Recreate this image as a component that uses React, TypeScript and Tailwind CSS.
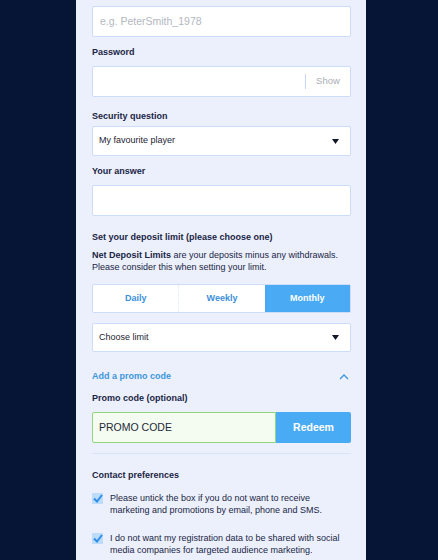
import React from "react";

const font = { fontFamily: '"Liberation Sans", Arial, Helvetica, sans-serif' };

function Label({ children, className = "" }: { children: React.ReactNode; className?: string }) {
  return (
    <div className={`text-[9px] leading-[12px] font-bold text-[#1b2545] ${className}`}>{children}</div>
  );
}

function Caret() {
  return (
    <svg width="7" height="5" viewBox="0 0 7 5" className="mr-[11px]">
      <path d="M0 0 H7 L3.5 5 Z" fill="#111827" />
    </svg>
  );
}

function Check() {
  return (
    <div className="w-[11px] h-[11px] bg-[#bcdcf9] flex items-center justify-center shrink-0 mt-[1px]">
      <svg width="10" height="9" viewBox="0 0 10 9">
        <path d="M1 4.5 L4 7.5 L9 1" stroke="#2f8de4" strokeWidth="2" fill="none" />
      </svg>
    </div>
  );
}

export default function App() {
  return (
    <div className="w-[438px] h-[560px] bg-[#061536] overflow-hidden" style={font}>
      <div className="ml-[76px] w-[290px] h-[560px] bg-[#ebf0fc] pl-[16px] pr-[15px] pt-[6px] flex flex-col">
        <div className="h-[31px] bg-white border border-[#cddcf8] rounded-[2px] flex items-center px-[7px] text-[10.5px] text-[#b3b7bf]">
          e.g. PeterSmith_1978
        </div>

        <Label className="mt-[9px]">Password</Label>
        <div className="mt-[8px] h-[31px] bg-white border border-[#cddcf8] rounded-[2px] flex items-center justify-end">
          <div className="w-[1px] h-[15px] bg-[#c6d7f5]" />
          <div className="w-[44px] text-center text-[9.5px] text-[#a9adb5]">Show</div>
        </div>

        <Label className="mt-[13px]">Security question</Label>
        <div className="mt-[4px] h-[30px] bg-white border border-[#cddcf8] rounded-[2px] flex items-center justify-between pl-[6px] text-[9px] text-[#1e2433]">
          <span>My favourite player</span>
          <Caret />
        </div>

        <Label className="mt-[9px]">Your answer</Label>
        <div className="mt-[8px] h-[31px] bg-white border border-[#cddcf8] rounded-[2px]" />

        <Label className="mt-[15px]">Set your deposit limit (please choose one)</Label>
        <div className="mt-[6px] text-[9px] leading-[12px] text-[#1b2545]">
          <span className="font-bold">Net Deposit Limits</span> are your deposits minus any withdrawals.
          <br />
          Please consider this when setting your limit.
        </div>

        <div className="mt-[11px] h-[29px] flex border border-[#cddcf8] rounded-[2px] bg-white text-[9px] font-bold">
          <div className="flex-1 flex items-center justify-center text-[#3b8fdc] border-r border-dotted border-[#dfe8f8]">Daily</div>
          <div className="flex-1 flex items-center justify-center text-[#3b8fdc]">Weekly</div>
          <div className="flex-1 flex items-center justify-center text-white bg-[#4aabf4]">Monthly</div>
        </div>

        <div className="mt-[10px] h-[29px] bg-white border border-[#cddcf8] rounded-[2px] flex items-center justify-between pl-[6px] text-[9px] text-[#1e2433]">
          <span>Choose limit</span>
          <Caret />
        </div>

        <div className="mt-[19px] h-[12px] flex items-center justify-between">
          <span className="text-[9px] font-bold text-[#3d96dc]">Add a promo code</span>
          <svg width="10" height="6" viewBox="0 0 10 6" className="mr-[2px]">
            <path d="M1 5 L5 1 L9 5" stroke="#3d96dc" strokeWidth="1.3" fill="none" />
          </svg>
        </div>

        <Label className="mt-[9px]">Promo code (optional)</Label>
        <div className="mt-[8px] h-[31px] flex">
          <div className="flex-1 bg-[#f4fbf1] border border-[#8fd67e] rounded-l-[2px] flex items-center px-[6px] text-[10.5px] text-[#222a38]">
            PROMO CODE
          </div>
          <div className="w-[75px] bg-[#4aabf5] rounded-r-[2px] flex items-center justify-center text-[10.5px] font-bold text-white">
            Redeem
          </div>
        </div>

        <div className="mt-[10px] h-[1px] bg-[#d8e3f8]" />

        <Label className="mt-[15px]">Contact preferences</Label>

        <div className="mt-[11px] flex gap-[7px]">
          <Check />
          <div className="text-[9px] leading-[12px] text-[#1b2545]">
            Please untick the box if you do not want to receive
            <br />
            marketing and promotions by email, phone and SMS.
          </div>
        </div>

        <div className="mt-[16px] flex gap-[7px]">
          <Check />
          <div className="text-[9px] leading-[12px] text-[#1b2545]">
            I do not want my registration data to be shared with social
            <br />
            media companies for targeted audience marketing.
          </div>
        </div>
      </div>
    </div>
  );
}
